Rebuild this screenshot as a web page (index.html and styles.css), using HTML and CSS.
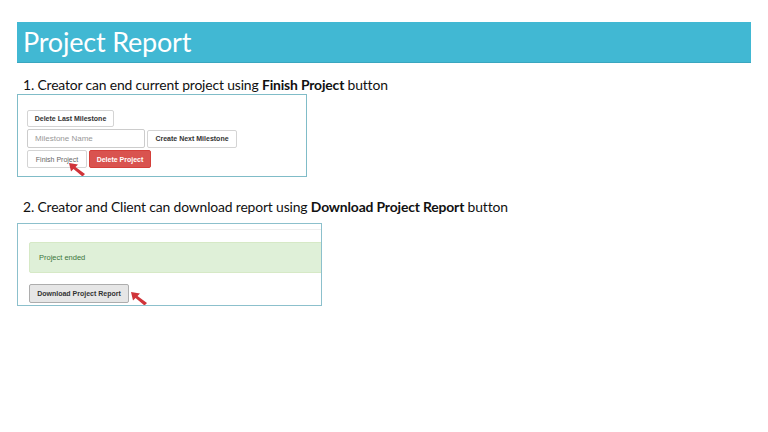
FILE: index.html
```html
<!DOCTYPE html>
<html>
<head>
<meta charset="utf-8">
<link rel="stylesheet" href="styles.css">
</head>
<body>
<div class="slide">
  <div class="title-bar"><h1 class="title">Project Report</h1></div>

  <p class="step step-one">1. Creator can end current project using <b>Finish Project</b> button</p>
  <div class="shot shot-one">
    <div class="row"><span class="btn">Delete Last Milestone</span></div>
    <div class="row">
      <span class="input">Milestone Name</span>
      <span class="btn">Create Next Milestone</span>
    </div>
    <div class="row">
      <span class="btn btn-plain">Finish Project</span>
      <span class="btn btn-danger">Delete Project</span>
    </div>
    <svg class="pointer pointer-one" width="18" height="14" viewBox="0 0 18 14">
      <polygon points="0,0 9,1.5 6.5,4 16,11 13.5,13.5 4.5,6 2,8.5" fill="#d0343a"/>
    </svg>
  </div>

  <p class="step step-two">2. Creator and Client can download report using <b>Download Project Report</b> button</p>
  <div class="shot shot-two">
    <div class="rule"></div>
    <div class="alert">Project ended</div>
    <span class="btn btn-default">Download Project Report</span>
    <svg class="pointer pointer-two" width="18" height="14" viewBox="0 0 18 14">
      <polygon points="0,0 9,1.5 6.5,4 16,11 13.5,13.5 4.5,6 2,8.5" fill="#d0343a"/>
    </svg>
  </div>
</div>
</body>
</html>
```

FILE: styles.css
```css
html, body {
  margin: 0;
  padding: 0;
  background: #ffffff;
}

.slide {
  width: 768px;
  height: 432px;
  padding: 22px 0 0 17px;
  box-sizing: border-box;
  font-family: Lato, "Open Sans", sans-serif;
  color: #111111;
}

.title-bar {
  width: 734px;
  height: 41px;
  background: #41b8d3;
  border-bottom: 1px solid #3aa6bf;
  box-sizing: border-box;
  display: flex;
  align-items: center;
}

.title {
  margin: 0 0 0 6px;
  font-family: Lato, "Open Sans", sans-serif;
  font-weight: 400;
  font-size: 27px;
  line-height: 30px;
  color: #ffffff;
  letter-spacing: -0.2px;
}

.step {
  margin: 0;
  padding-left: 6px;
  font-size: 13.9px;
  line-height: 16px;
  letter-spacing: -0.15px;
}
.step b { font-weight: 700; }

.step-one { margin-top: 14px; }
.step-two { margin-top: 22px; }

.shot {
  position: relative;
  border: 1px solid #80bcc8;
  box-sizing: border-box;
  font-family: "Liberation Sans", Arial, sans-serif;
  overflow: hidden;
}

.shot-one {
  margin-top: 1px;
  width: 290px;
  height: 83px;
  padding: 15px 0 0 9px;
  display: flex;
  flex-direction: column;
  gap: 2px;
}

.row {
  display: flex;
  gap: 2px;
  align-items: center;
}

.btn {
  display: inline-flex;
  align-items: center;
  justify-content: center;
  height: 17px;
  padding: 0 6px;
  box-sizing: border-box;
  border: 1px solid #d4d4d4;
  border-radius: 2px;
  background: #ffffff;
  font-size: 7px;
  font-weight: 700;
  color: #333333;
  white-space: nowrap;
}
.row .btn:first-child { width: 87px; }
.row:nth-child(2) .btn { width: 90px; height: 18px; }
.btn-plain {
  font-weight: 400;
  color: #666666;
  width: 60px !important;
  height: 18px !important;
}
.btn-danger {
  background: #d9534f;
  border-color: #d43f3a;
  color: #ffffff;
  width: 62px;
  height: 18px;
}

.input {
  display: inline-flex;
  align-items: center;
  width: 118px;
  height: 19px;
  padding-left: 7px;
  box-sizing: border-box;
  border: 1px solid #cccccc;
  border-radius: 2px;
  font-size: 8px;
  color: #999999;
}

.shot-two {
  margin-top: 8px;
  width: 305px;
  height: 83px;
  padding: 5px 0 0 11px;
  border-color: #8cc0cc;
}

.rule {
  height: 1px;
  background: #eeeeee;
  margin-right: -20px;
}

.alert {
  margin-top: 12px;
  width: 320px;
  height: 31px;
  box-sizing: border-box;
  background: #dff0d8;
  border: 1px solid #d6e9c6;
  border-radius: 2px;
  padding-left: 9px;
  display: flex;
  align-items: center;
  font-size: 7.5px;
  color: #3c763d;
}

.btn-default {
  margin-top: 11px;
  width: 100px;
  height: 19px;
  background: #e6e6e6;
  border-color: #adadad;
  color: #333333;
  font-size: 7px;
}

.pointer {
  position: absolute;
}
.pointer-one { left: 51px; top: 68px; }
.pointer-two { left: 113px; top: 68px; }
```
